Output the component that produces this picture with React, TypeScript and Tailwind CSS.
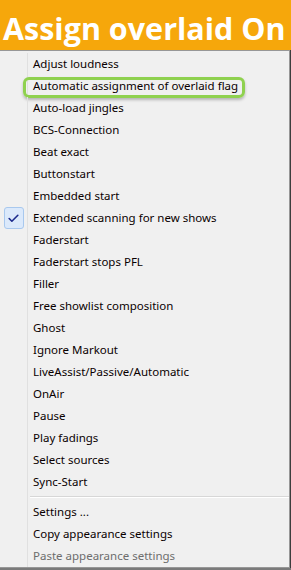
import { Check } from "lucide-react";

const items = [
  "Adjust loudness",
  "Automatic assignment of overlaid flag",
  "Auto-load jingles",
  "BCS-Connection",
  "Beat exact",
  "Buttonstart",
  "Embedded start",
  "Extended scanning for new shows",
  "Faderstart",
  "Faderstart stops PFL",
  "Filler",
  "Free showlist composition",
  "Ghost",
  "Ignore Markout",
  "LiveAssist/Passive/Automatic",
  "OnAir",
  "Pause",
  "Play fadings",
  "Select sources",
  "Sync-Start",
];

function Row({
  label,
  checked,
  highlight,
  disabled,
}: {
  label: string;
  checked?: boolean;
  highlight?: boolean;
  disabled?: boolean;
}) {
  return (
    <div className="relative flex h-[22px] items-center">
      <div className="flex h-full w-[28px] shrink-0 items-center justify-center border-r border-[#e0e0e0]">
        {checked ? (
          <div className="flex h-[22px] w-[20px] items-center justify-center rounded-[3px] border border-[#a8c8ee] bg-[#dbe9fb]">
            <Check size={13} strokeWidth={3} className="text-[#1c2a8c]" />
          </div>
        ) : null}
      </div>
      <span className={`pl-[5px] ${disabled ? "text-[#6d6d6d]" : "text-[#0a0000]"}`}>
        {label}
      </span>
      {highlight ? (
        <div className="absolute left-[23px] top-[2px] h-[21px] w-[222px] rounded-[6px] border-[3px] border-[#8fd14f] shadow-[0_2px_3px_rgba(0,0,0,0.25)]" />
      ) : null}
    </div>
  );
}

export default function App() {
  return (
    <div className="flex h-[570px] w-[291px] flex-col overflow-hidden bg-[#7a7a7a]">
      <div className="flex h-[50px] shrink-0 items-end bg-[#f6a70b] pb-[2px] pl-[3px]">
        <h1 className="font-['Open_Sans',sans-serif] text-[30.5px] font-bold leading-[40px] text-white">
          Assign overlaid On
        </h1>
      </div>
      <div className="flex">
        <div className="w-[290px] border-r border-t border-b border-[#979797] bg-[#f0f0f0] pt-[2px] font-['Noto_Sans',sans-serif] text-[11.5px]">
          {items.map((label, i) => (
            <Row
              key={label}
              label={label}
              highlight={i === 1}
              checked={label.startsWith("Extended")}
            />
          ))}
          <div className="flex h-[8px]">
            <div className="w-[28px] border-r border-[#e0e0e0]" />
            <div className="flex-1 pl-[2px] pt-[3px]">
              <div className="border-b border-t border-b-white border-t-[#d7d7d7]" />
            </div>
          </div>
          <Row label="Settings ..." />
          <Row label="Copy appearance settings" />
          <Row label="Paste appearance settings" disabled />
        </div>
        <div className="flex-1 bg-[#3d3d3d]" />
      </div>
    </div>
  );
}
